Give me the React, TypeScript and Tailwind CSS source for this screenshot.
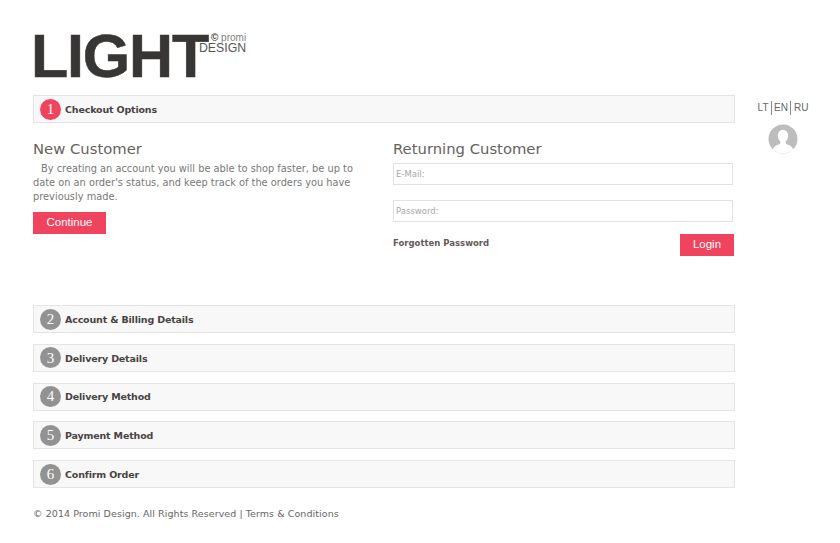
const verdana = "font-['DejaVu_Sans',sans-serif]";

function Row({ n, label, active = false, className = "" }: { n: number; label: string; active?: boolean; className?: string }) {
  return (
    <div className={`flex h-[28px] items-center border border-[#e4e4e4] bg-[#f8f8f8] pl-[6px] ${className}`}>
      <span className={`flex h-[21px] w-[21px] items-center justify-center rounded-full font-['Liberation_Serif',serif] text-[15px] text-white ${active ? "bg-[#f0435e]" : "bg-[#929292]"}`}>
        {n}
      </span>
      <span className="ml-[4px] pt-[2px] text-[9.5px] font-bold tracking-[-0.17px] text-[#484343]">{label}</span>
    </div>
  );
}

function Field({ placeholder, className = "" }: { placeholder: string; className?: string }) {
  return (
    <div className={`flex h-[22px] w-[340px] items-center border border-[#e2e2e2] bg-white pl-[2px] text-[8.5px] text-[#a8a8a8] ${className}`}>
      {placeholder}
    </div>
  );
}

export default function App() {
  return (
    <div className={`flex h-[543px] w-[840px] overflow-hidden bg-white pl-[33px] ${verdana}`}>
      <div className="w-[702px] shrink-0">
        <div className="flex h-[95px] items-start pt-[21px]">
          <span className="-ml-[2px] font-['Liberation_Sans',sans-serif] text-[61px] leading-[70px] font-bold tracking-[-1.2px] text-[#383535] [-webkit-text-stroke:0.5px_#383535]">LIGHT</span>
          <div className="mt-[12px] -ml-[9px] flex flex-col items-end font-['Liberation_Sans',sans-serif] text-[#555]">
            <span className="text-[10px] leading-[10px] text-[#808080]"><b className="text-[#444]">©</b> promi</span>
            <span className="text-[12.3px] leading-[10px]">DESIGN</span>
          </div>
        </div>

        <Row n={1} label="Checkout Options" active />

        <div className="flex h-[182px]">
          <div className="w-[360px] pt-[16px]">
            <h2 className="text-[14.8px] leading-[20px] text-[#666161]">New Customer</h2>
            <p className="mt-[3px] w-[326px] indent-[8px] text-[9.8px] leading-[14px] tracking-[0.01px] text-[#777]">
              By creating an account you will be able to shop faster, be up to date on an order's status, and keep track of the orders you have previously made.
            </p>
            <div className="mt-[8px] flex h-[22px] w-[73px] items-center justify-center bg-[#f0435e] font-['Liberation_Sans',sans-serif] text-[11.5px] text-white">
              Continue
            </div>
          </div>
          <div className="w-[341px] pt-[16px]">
            <h2 className="text-[14.8px] leading-[20px] text-[#666161]">Returning Customer</h2>
            <Field placeholder="E-Mail:" className="mt-[4px]" />
            <Field placeholder="Password:" className="mt-[15px]" />
            <div className="mt-[12px] flex items-start justify-between">
              <span className="pt-[3px] text-[8.5px] leading-[12px] font-bold text-[#5f5a5a]">Forgotten Password</span>
              <div className="flex h-[22px] w-[54px] items-center justify-center bg-[#f0435e] font-['Liberation_Sans',sans-serif] text-[11.5px] text-white">
                Login
              </div>
            </div>
          </div>
        </div>

        <div className="flex flex-col gap-[10.75px]">
          <Row n={2} label="Account & Billing Details" />
          <Row n={3} label="Delivery Details" />
          <Row n={4} label="Delivery Method" />
          <Row n={5} label="Payment Method" />
          <Row n={6} label="Confirm Order" />
        </div>

        <p className="mt-[20px] text-[9.5px] leading-[12px] tracking-[0.07px] text-[#666]">© 2014 Promi Design. All Rights Reserved | Terms &amp; Conditions</p>
      </div>

      <div className="ml-[23px] flex w-[50px] flex-col items-center pt-[101px]">
        <div className="flex items-center font-['Liberation_Sans',sans-serif] text-[10px] leading-[14px] text-[#666]">
          <span className="border-r border-[#888] pr-[2px]">LT</span>
          <span className="border-r border-[#888] px-[2.5px]">EN</span>
          <span className="pl-[2.5px]">RU</span>
        </div>
        <svg className="mt-[9px]" width="30" height="30" viewBox="0 0 30 30">
          <defs>
            <clipPath id="c"><circle cx="15" cy="15" r="14.5" /></clipPath>
          </defs>
          <circle cx="15" cy="15" r="14.5" fill="#bdbdbd" />
          <g clipPath="url(#c)" fill="#fff">
            <ellipse cx="15" cy="12" rx="5.2" ry="6.2" />
            <path d="M12.5 17 L17.5 17 L18 20 C22 21 26 23 26 30 L4 30 C4 23 8 21 12 20 Z" />
          </g>
        </svg>
      </div>
    </div>
  );
}
